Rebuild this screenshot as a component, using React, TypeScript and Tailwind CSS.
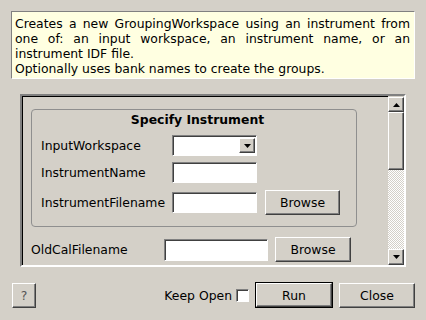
import React from 'react';

const sunken =
  'border border-t-[#808080] border-l-[#808080] border-b-white border-r-white shadow-[inset_1px_1px_0_#404040]';
const raised =
  'border border-t-white border-l-white border-b-[#404040] border-r-[#404040] shadow-[inset_-1px_-1px_0_#808080]';

const Button: React.FC<{ label: string; className?: string }> = ({ label, className = '' }) => (
  <div className={`flex items-center justify-center bg-[#d4d0c8] ${raised} ${className}`}>{label}</div>
);

const Arrow: React.FC<{ up?: boolean }> = ({ up }) => (
  <svg width="7" height="4" viewBox="0 0 7 4">
    {up ? <polygon points="3.5,0 7,4 0,4" fill="#000" /> : <polygon points="0,0 7,0 3.5,4" fill="#000" />}
  </svg>
);

const TextBox: React.FC<{ className?: string }> = ({ className = '' }) => (
  <div className={`bg-white ${sunken} ${className}`} />
);

export default function App() {
  return (
    <div
      className="w-[426px] h-[320px] bg-[#d4d0c8] flex flex-col pt-[11px] text-[12.4px] leading-[15px] text-black overflow-hidden"
      style={{ fontFamily: '"DejaVu Sans", Verdana, sans-serif' }}
    >
      {/* algorithm description */}
      <div className="mx-[11px] h-[68px] bg-[#ffffe1] border border-t-[#808080] border-l-[#808080] border-b-white border-r-white pt-[4px] pl-[3px] pr-[4px]">
        <div className="whitespace-nowrap text-justify [text-align-last:justify]">
          Creates a new GroupingWorkspace using an instrument from
        </div>
        <div className="whitespace-nowrap text-justify [text-align-last:justify]">
          one of: an input workspace, an instrument name, or an
        </div>
        <div>instrument IDF file.</div>
        <div>Optionally uses bank names to create the groups.</div>
      </div>

      {/* property scroll area */}
      <div className="mt-[15px] ml-[20px] w-[386px] h-[173px] border-2 border-t-[#808080] border-l-[#808080] border-b-white border-r-white flex">
        <div className="flex-1 flex flex-col border-t border-l border-black overflow-hidden pl-[8px] pt-[12px]">
          <div className="w-[326px] border border-[#8f8f8f] rounded-[4px] pt-[2px] pl-[9px] pb-[11px]">
            <div className="text-center font-bold pr-[2px]">Specify Instrument</div>
            <div className="mt-[8px] grid grid-cols-[131px_85px_auto] items-center gap-y-[6px]">
              <div>InputWorkspace</div>
              <div className={`h-[21px] bg-white ${sunken} flex justify-end items-center pr-[1px]`}>
                <div className={`w-[16px] h-[15px] bg-[#d4d0c8] ${raised} flex items-center justify-center`}>
                  <Arrow />
                </div>
              </div>
              <div />
              <div>InstrumentName</div>
              <TextBox className="h-[21px]" />
              <div />
              <div className="mt-[1px]">InstrumentFilename</div>
              <TextBox className="h-[21px] mt-[1px]" />
              <Button label="Browse" className="ml-[8px] w-[75px] h-[25px] mt-[1px]" />
            </div>
          </div>
          <div className="mt-[10px] flex items-center">
            <div className="w-[133px]">OldCalFilename</div>
            <TextBox className="w-[104px] h-[22px]" />
            <Button label="Browse" className="ml-[7px] w-[76px] h-[25px]" />
          </div>
        </div>
        {/* vertical scrollbar */}
        <div className="w-[16px] flex flex-col pt-[1px]">
          <div className={`h-[15px] bg-[#d4d0c8] ${raised} flex items-center justify-center`}>
            <Arrow up />
          </div>
          <div className={`h-[58px] bg-[#d4d0c8] ${raised}`} />
          <div className="flex-1 bg-[repeating-conic-gradient(#ffffff_0_25%,#d4d0c8_0_50%)] bg-[length:2px_2px]" />
          <div className={`h-[16px] bg-[#d4d0c8] ${raised} flex items-center justify-center`}>
            <Arrow />
          </div>
        </div>
      </div>

      {/* bottom buttons */}
      <div className="mt-[15px] pl-[12px] pr-[11px] flex items-center">
        <Button label="?" className="w-[24px] h-[25px] text-[#555]" />
        <div className="flex-1" />
        <div className="mr-[4px]">Keep Open</div>
        <div className={`w-[13px] h-[13px] bg-white ${sunken}`} />
        <div className="ml-[6px] border border-black">
          <Button label="Run" className="w-[76px] h-[24px]" />
        </div>
        <Button label="Close" className="ml-[6px] w-[76px] h-[25px]" />
      </div>
    </div>
  );
}
